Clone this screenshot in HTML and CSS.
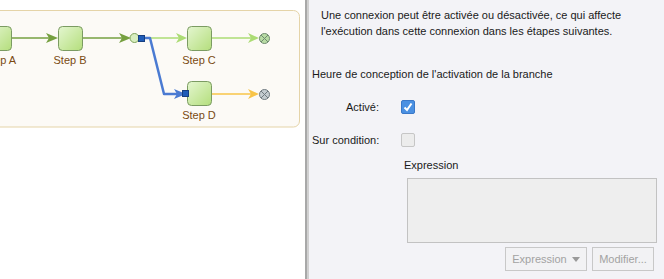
FILE: index.html
```html
<!DOCTYPE html>
<html>
<head>
<meta charset="utf-8">
<link rel="stylesheet" href="styles.css">
</head>
<body>
<div class="app">
  <div class="canvas">
    <svg class="diagram" width="305" height="279" viewBox="0 0 305 279">
      <defs>
        <linearGradient id="ng" x1="0" y1="0" x2="1" y2="1">
          <stop offset="0" stop-color="#e4f6d0"/>
          <stop offset="1" stop-color="#b4de7c"/>
        </linearGradient>
      </defs>
      <rect x="-20" y="10.5" width="319.5" height="116.5" rx="6" fill="#fcfaf6" stroke="#e5d4a8"/>
      <!-- A -> B -->
      <line x1="12" y1="38" x2="50" y2="38" stroke="#76a040" stroke-width="1.5"/>
      <path d="M46 33 L58 38 L46 43 L49 38 Z" fill="#76a040"/>
      <!-- B -> junction -->
      <line x1="83" y1="38" x2="122" y2="38" stroke="#76a040" stroke-width="1.5"/>
      <path d="M119 33 L131 38 L119 43 L122 38 Z" fill="#76a040"/>
      <!-- junction -> C -->
      <line x1="144" y1="38" x2="180" y2="38" stroke="#acdc74" stroke-width="1.5"/>
      <path d="M176 33 L187 38 L176 43 L179 38 Z" fill="#acdc74"/>
      <!-- C -> end -->
      <line x1="211" y1="38" x2="252" y2="38" stroke="#acdc74" stroke-width="1.5"/>
      <path d="M248 33 L259 38 L248 43 L251 38 Z" fill="#acdc74"/>
      <!-- D -> end -->
      <line x1="211" y1="94" x2="252" y2="94" stroke="#f8c448" stroke-width="1.5"/>
      <path d="M248 89 L259 94 L248 99 L251 94 Z" fill="#f8c448"/>
      <!-- blue branch -->
      <path d="M143 38 L150 38 L164 94 L178 94" fill="none" stroke="#4a7ad2" stroke-width="2.5" stroke-linejoin="round"/>
      <path d="M174 89 L186 94 L174 99 L177 94 Z" fill="#4a7ad2"/>
      <!-- junction -->
      <circle cx="134.5" cy="38" r="4.5" fill="#d8eec0" stroke="#7ea25a"/>
      <rect x="138.5" y="35.5" width="6" height="6" fill="#1f5cb8" stroke="#173f80"/>
      <!-- nodes -->
      <rect x="-12.5" y="26.5" width="24" height="24" rx="4" fill="url(#ng)" stroke="#7b9b62"/>
      <rect x="58.5" y="26.5" width="24" height="24" rx="4" fill="url(#ng)" stroke="#7b9b62"/>
      <rect x="187.5" y="26.5" width="24" height="24" rx="4" fill="url(#ng)" stroke="#7b9b62"/>
      <rect x="187.5" y="81.5" width="24" height="24" rx="4" fill="url(#ng)" stroke="#7b9b62"/>
      <rect x="182.5" y="90.5" width="6" height="6" fill="#1f5cb8" stroke="#173f80"/>
      <!-- end circles -->
      <g stroke="#6f8a70" stroke-width="1">
        <circle cx="264.5" cy="38.5" r="5" fill="#b8dca4"/>
        <line x1="261" y1="35" x2="268" y2="42"/>
        <line x1="268" y1="35" x2="261" y2="42"/>
      </g>
      <g stroke="#707a80" stroke-width="1">
        <circle cx="264.5" cy="94.5" r="5" fill="#c4ccd0"/>
        <line x1="261" y1="91" x2="268" y2="98"/>
        <line x1="268" y1="91" x2="261" y2="98"/>
      </g>
      <g class="lbl">
        <text x="0" y="64" text-anchor="middle">Step A</text>
        <text x="70" y="64" text-anchor="middle">Step B</text>
        <text x="199" y="64" text-anchor="middle">Step C</text>
        <text x="199" y="119" text-anchor="middle">Step D</text>
      </g>
    </svg>
  </div>
  <div class="splitter"></div>
  <div class="panel">
    <p class="desc">Une connexion peut être activée ou désactivée, ce qui affecte l'exécution dans cette connexion dans les étapes suivantes.</p>
    <div class="section">Heure de conception de l'activation de la branche</div>
    <div class="form">
      <div class="label">Activé:</div>
      <div class="cb checked">
        <svg width="14" height="14" viewBox="0 0 14 14"><path d="M3.5 7.5 L6 10 L10.5 3.5" fill="none" stroke="#fff" stroke-width="2"/></svg>
      </div>
      <div class="label">Sur condition:</div>
      <div class="cb"></div>
    </div>
    <div class="expr">
      <div class="expr-label">Expression</div>
      <div class="textarea"></div>
      <div class="buttons">
        <div class="btn btn-expr">Expression <span class="caret"></span></div>
        <div class="btn btn-mod">Modifier...</div>
      </div>
    </div>
  </div>
</div>
</body>
</html>
```
FILE: styles.css
```css
html, body {
  margin: 0;
  padding: 0;
  height: 100%;
}
body {
  font-family: "Liberation Sans", Arial, sans-serif;
  font-size: 11px;
  color: #1a1a1a;
}
.app {
  display: flex;
  height: 279px;
  width: 664px;
  overflow: hidden;
}
.canvas {
  width: 305px;
  flex: none;
  background: #fff;
  overflow: hidden;
}
.diagram {
  display: block;
}
.lbl text {
  font-family: "Liberation Sans", Arial, sans-serif;
  font-size: 11px;
  fill: #7a4a12;
}
.splitter {
  width: 2px;
  flex: none;
  background: #a8a8a8;
  border-right: 2px solid #d0d0d0;
}
.panel {
  flex: 1;
  background: #f3f3f7;
  padding: 0 0 0 3px;
  display: flex;
  flex-direction: column;
}
.desc {
  margin: 7px 0 0 9px;
  line-height: 16px;
  width: 330px;
}
.section {
  margin-top: 27px;
  line-height: 16px;
  white-space: nowrap;
}
.form {
  display: grid;
  grid-template-columns: 67px 14px;
  column-gap: 22px;
  row-gap: 19px;
  align-items: center;
  margin-top: 18px;
}
.label {
  text-align: right;
  line-height: 14px;
  white-space: nowrap;
}
.cb {
  width: 12px;
  height: 12px;
  border: 1px solid #c6c6c6;
  border-radius: 2px;
  background: #ececec;
  position: relative;
}
.cb.checked {
  background: #4a90e2;
  border-color: #3a78c8;
}
.cb svg {
  position: absolute;
  left: -1px;
  top: -1px;
}
.expr {
  margin-left: 92px;
  margin-top: 11px;
  display: flex;
  flex-direction: column;
}
.expr-label {
  line-height: 14px;
}
.textarea {
  margin-top: 6px;
  margin-left: 3px;
  width: 248px;
  height: 63px;
  border: 1px solid #c2c2c2;
  background: #eeeeee;
}
.buttons {
  display: flex;
  justify-content: flex-end;
  gap: 5px;
  margin-top: 4px;
  width: 247px;
  margin-left: 3px;
}
.btn {
  box-sizing: border-box;
  height: 24px;
  border: 1px solid #c8c8c8;
  background: #f2f2f4;
  color: #a2a2a2;
  display: flex;
  align-items: center;
  justify-content: center;
}
.btn-expr {
  width: 82px;
}
.btn-mod {
  width: 62px;
}
.caret {
  display: inline-block;
  width: 0;
  height: 0;
  border-left: 4px solid transparent;
  border-right: 4px solid transparent;
  border-top: 5px solid #9a9a9a;
  margin-left: 5px;
}
```
